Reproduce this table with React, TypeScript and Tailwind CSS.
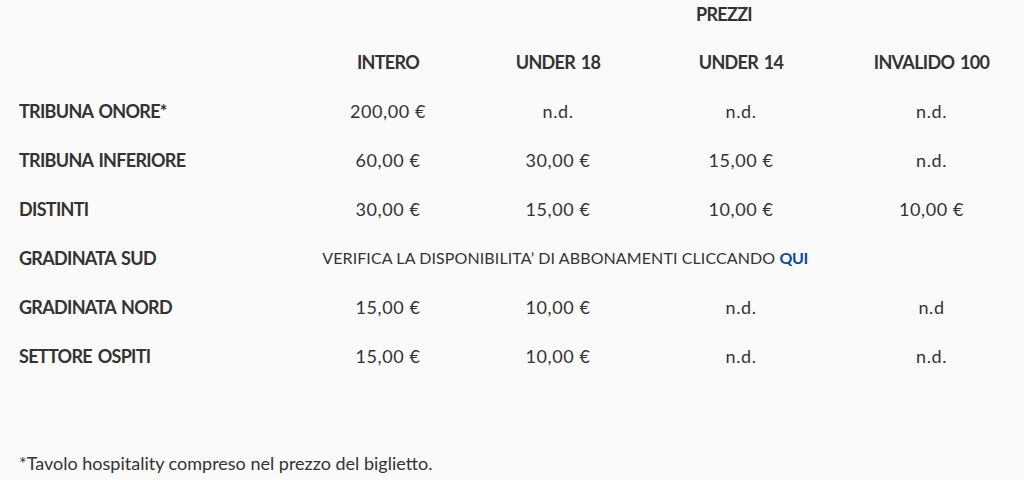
import React from "react";

const cols = ["INTERO", "UNDER 18", "UNDER 14", "INVALIDO 100"];

const rows: { label: string; values?: string[]; note?: boolean }[] = [
  { label: "TRIBUNA ONORE*", values: ["200,00 €", "n.d.", "n.d.", "n.d."] },
  { label: "TRIBUNA INFERIORE", values: ["60,00 €", "30,00 €", "15,00 €", "n.d."] },
  { label: "DISTINTI", values: ["30,00 €", "15,00 €", "10,00 €", "10,00 €"] },
  { label: "GRADINATA SUD", note: true },
  { label: "GRADINATA NORD", values: ["15,00 €", "10,00 €", "n.d.", "n.d"] },
  { label: "SETTORE OSPITI", values: ["15,00 €", "10,00 €", "n.d.", "n.d."] },
];

const grid = "grid grid-cols-[303px_170px_170px_196px_185px]";
const bold = "font-bold text-[18px] tracking-[-0.7px] [word-spacing:2px] leading-[22px]";
const value = "text-center text-[18px] tracking-[0.6px] leading-[22px]";

export default function App() {
  return (
    <div className="w-[1024px] h-[480px] bg-[#fafafa] text-[#333333] font-['Lato',sans-serif] overflow-hidden">
      {/* titolo prezzi */}
      <div className="h-[29px] pl-[643px] pt-[3px]">
        <div className={`${bold} w-[162px] text-center`}>PREZZI</div>
      </div>

      {/* intestazioni */}
      <div className={`${grid} h-[57px] pt-[22px] items-start`}>
        <div />
        {cols.map((c) => (
          <div key={c} className={`${bold} text-center`}>
            {c}
          </div>
        ))}
      </div>

      {/* righe */}
      {rows.map((r) => (
        <div key={r.label} className={`${grid} h-[49px] items-center`}>
          <div className={`${bold} pl-[19px]`}>{r.label}</div>
          {r.note ? (
            <div className="col-span-3 flex justify-center pr-[12px]">
              <span className="whitespace-nowrap text-[16px] tracking-[0.1px] leading-[22px]">
                VERIFICA LA DISPONIBILITA’ DI ABBONAMENTI CLICCANDO{" "}
                <a href="#" className="font-bold text-[#0d4a9b] tracking-[-0.4px]">
                  QUI
                </a>
              </span>
            </div>
          ) : (
            r.values!.map((v, i) => (
              <div key={i} className={value}>
                {v}
              </div>
            ))
          )}
        </div>
      ))}

      {/* nota */}
      <div className="pl-[19px] pt-[70px] text-[18px]">
        *Tavolo hospitality compreso nel prezzo del biglietto.
      </div>
    </div>
  );
}
